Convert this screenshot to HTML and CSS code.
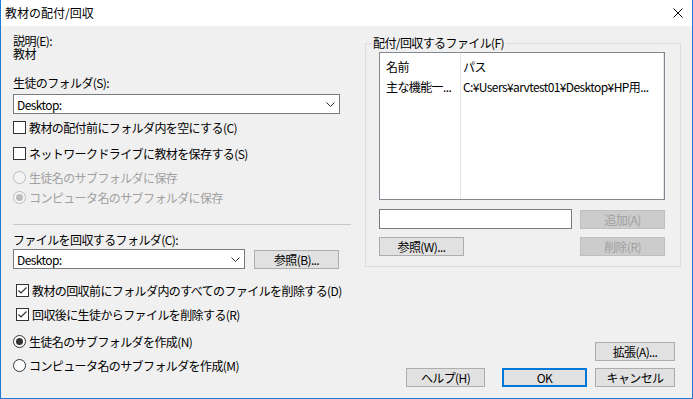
FILE: index.html
```html
<!DOCTYPE html>
<html lang="ja">
<head>
    <meta charset="UTF-8">
    <title>教材の配付/回収</title>
    <link rel="stylesheet" href="styles.css">
</head>
<body>
    <div class="window">
        <div class="titlebar">
            <span class="title">教材の配付/回収</span>
            <span class="close">
                <svg width="10" height="10" viewBox="0 0 10 10"><path d="M0.5 0.5 L9.5 9.5 M9.5 0.5 L0.5 9.5" stroke="#000" stroke-width="1" fill="none"/></svg>
            </span>
        </div>

        <div class="main">
            <div class="left">
                <div class="desc">説明(E):</div>
                <div class="desc-value">教材</div>

                <div class="label label-s">生徒のフォルダ(S):</div>
                <div class="combo combo-wide">
                    <span>Desktop:</span>
                    <svg width="9" height="5" viewBox="0 0 9 5"><polyline points="0.5,0.5 4.5,4.5 8.5,0.5" stroke="#333" fill="none"/></svg>
                </div>

                <div class="check cb1"><span class="box"></span>教材の配付前にフォルダ内を空にする(C)</div>
                <div class="check cb2"><span class="box"></span>ネットワークドライブに教材を保存する(S)</div>
                <div class="check r1 disabled"><span class="radio"></span>生徒名のサブフォルダに保存</div>
                <div class="check r2 disabled"><span class="radio on"></span>コンピュータ名のサブフォルダに保存</div>

                <div class="sep"></div>

                <div class="label label-c">ファイルを回収するフォルダ(C):</div>
                <div class="collect-row">
                    <div class="combo combo-short">
                        <span>Desktop:</span>
                        <svg width="9" height="5" viewBox="0 0 9 5"><polyline points="0.5,0.5 4.5,4.5 8.5,0.5" stroke="#333" fill="none"/></svg>
                    </div>
                    <button class="btn btn-browse">参照(B)...</button>
                </div>

                <div class="check cb3 indent"><span class="box">
                    <svg width="11" height="11" viewBox="0 0 11 11"><polyline points="1.5,5.5 4,8 9.5,2.5" stroke="#333" stroke-width="1.2" fill="none"/></svg>
                </span>教材の回収前にフォルダ内のすべてのファイルを削除する(D)</div>
                <div class="check cb4 indent"><span class="box">
                    <svg width="11" height="11" viewBox="0 0 11 11"><polyline points="1.5,5.5 4,8 9.5,2.5" stroke="#333" stroke-width="1.2" fill="none"/></svg>
                </span>回収後に生徒からファイルを削除する(R)</div>
                <div class="check r3"><span class="radio on"></span>生徒名のサブフォルダを作成(N)</div>
                <div class="check r4"><span class="radio"></span>コンピュータ名のサブフォルダを作成(M)</div>
            </div>

            <div class="right">
                <fieldset class="group">
                    <legend>配付/回収するファイル(F)</legend>
                    <div class="listview">
                        <div class="col col-name">
                            <div class="cell-head">名前</div>
                            <div class="cell">主な機能一...</div>
                        </div>
                        <div class="col col-path">
                            <div class="cell-head">パス</div>
                            <div class="cell">C:¥Users¥arvtest01¥Desktop¥HP用...</div>
                        </div>
                    </div>
                    <div class="file-row">
                        <input type="text" class="file-input">
                        <button class="btn btn-side" disabled>追加(A)</button>
                    </div>
                    <div class="file-row file-row2">
                        <button class="btn btn-side">参照(W)...</button>
                        <button class="btn btn-side" disabled>削除(R)</button>
                    </div>
                </fieldset>

                <div class="actions">
                    <div class="actions-row">
                        <button class="btn btn-ext">拡張(A)...</button>
                    </div>
                    <div class="actions-row actions-main">
                        <button class="btn btn-help">ヘルプ(H)</button>
                        <button class="btn btn-ok">OK</button>
                        <button class="btn btn-cancel">キャンセル</button>
                    </div>
                </div>
            </div>
        </div>
    </div>
</body>
</html>
```

FILE: styles.css
```css
* {
    box-sizing: border-box;
}

body {
    margin: 0;
    font-family: "Noto Sans CJK JP", "Noto Sans", sans-serif;
    font-size: 12px;
    color: #000;
    background: #fff;
}

.window {
    width: 693px;
    height: 399px;
    border: 1px solid #1e7bd5;
    border-top: none;
    background: #f0f0f0;
    display: flex;
    flex-direction: column;
}

.titlebar {
    height: 26px;
    background: #fff;
    display: flex;
    align-items: center;
}

.title {
    flex: 1;
    padding-left: 4px;
    line-height: 14px;
}

.close {
    width: 28px;
    display: flex;
    justify-content: center;
}

.main {
    display: flex;
    flex: 1;
    letter-spacing: -0.6px;
}

/* left column */
.left {
    width: 338px;
    margin-left: 12px;
}

.desc {
    margin-top: 9px;
    line-height: 12px;
}

.desc-value {
    line-height: 12px;
    margin-top: 1px;
}

.label {
    line-height: 14px;
    white-space: nowrap;
}

.label-s {
    margin-top: 16px;
}

.label-c {
    margin-top: 8px;
}

.combo {
    height: 20px;
    border: 1px solid #7a7a7a;
    background: #fff;
    display: flex;
    align-items: center;
    justify-content: space-between;
    padding: 0 4px 0 3px;
}

.combo-wide {
    margin-top: 4px;
    width: 327px;
}

.combo-short {
    width: 232px;
}

.check {
    height: 20px;
    display: flex;
    align-items: center;
    gap: 3px;
    white-space: nowrap;
}

.check.disabled {
    color: #a0a0a0;
}

.box {
    width: 13px;
    height: 13px;
    border: 1px solid #333;
    background: #fff;
    display: flex;
    align-items: center;
    justify-content: center;
    flex-shrink: 0;
}

.radio {
    width: 13px;
    height: 13px;
    border: 1px solid #333;
    border-radius: 50%;
    background: #fff;
    display: flex;
    align-items: center;
    justify-content: center;
    flex-shrink: 0;
}

.radio.on::after {
    content: "";
    width: 7px;
    height: 7px;
    border-radius: 50%;
    background: #333;
}

.disabled .radio {
    border-color: #bcbcbc;
    background: #f4f4f4;
}

.disabled .radio.on::after {
    background: #bcbcbc;
}

.cb1 { margin-top: 3px; }
.cb2 { margin-top: 6px; }
.r1 { margin-top: 4px; }
.r2 { margin-top: 0; }
.cb3 { margin-top: 11px; }
.cb4 { margin-top: 4px; }
.r3 { margin-top: 7px; }
.r4 { margin-top: 4px; }

.indent {
    margin-left: 3px;
}

.sep {
    margin-top: 17px;
    border-top: 1px solid #c8c8c8;
}

.collect-row {
    display: flex;
    align-items: flex-start;
    margin-top: 2px;
}

/* buttons */
.btn {
    height: 19px;
    border: 1px solid #adadad;
    background: #e1e1e1;
    font-family: inherit;
    font-size: 12px;
    letter-spacing: inherit;
    color: #000;
    padding: 0;
    display: flex;
    align-items: center;
    justify-content: center;
}

.btn:disabled {
    background: #cccccc;
    border-color: #bfbfbf;
    color: #a0a0a0;
}

.btn-browse {
    width: 85px;
    margin: 1px 0 0 9px;
}

/* right column */
.right {
    width: 316px;
    margin-left: 14px;
}

.group {
    margin: 10px 0 0;
    padding: 2px 15px 10px 13px;
    border: 1px solid #dcdcdc;
    min-width: 0;
}

.group legend {
    padding: 0 2px;
    margin-left: -8px;
    line-height: 14px;
    white-space: nowrap;
}

.listview {
    width: 286px;
    height: 148px;
    border: 1px solid #828790;
    background: #fff;
    display: flex;
}

.col {
    display: flex;
    flex-direction: column;
    border-right: 1px solid #e5e5e5;
    white-space: nowrap;
    overflow: hidden;
}

.col-name {
    width: 81px;
    padding-left: 6px;
}

.col-path {
    width: 203px;
    padding-left: 2px;
}

.cell-head {
    padding-top: 4px;
    line-height: 20px;
}

.cell {
    line-height: 20px;
}

.file-row {
    display: flex;
    justify-content: space-between;
    align-items: center;
    margin-top: 9px;
}

.file-row2 {
    margin-top: 8px;
}

.file-input {
    width: 193px;
    height: 20px;
    border: 1px solid #7a7a7a;
    background: #fff;
    margin: 0;
}

.btn-side {
    width: 85px;
}

.actions {
    margin-top: 75px;
}

.actions-row {
    display: flex;
    justify-content: flex-end;
    padding-right: 6px;
}

.actions-main {
    margin-top: 7px;
}

.btn-ext {
    width: 80px;
}

.btn-help {
    width: 79px;
}

.btn-ok {
    width: 85px;
    margin-left: 17px;
    border: 2px solid #0078d7;
}

.btn-cancel {
    width: 80px;
    margin-left: 8px;
}
```
